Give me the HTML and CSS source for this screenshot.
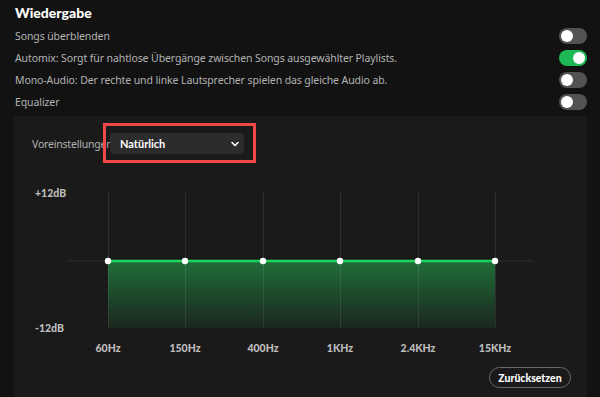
FILE: index.html
```html
<!DOCTYPE html>
<html lang="de">
<head>
    <meta charset="UTF-8">
    <meta name="viewport" content="width=device-width, initial-scale=1.0">
    <title>Wiedergabe</title>
    <link rel="stylesheet" href="styles.css">
</head>
<body>
    <main class="page">
        <h1 class="title">Wiedergabe</h1>
        <ul class="settings">
            <li class="row"><span>Songs überblenden</span><span class="toggle"></span></li>
            <li class="row"><span>Automix: Sorgt für nahtlose Übergänge zwischen Songs ausgewählter Playlists.</span><span class="toggle on"></span></li>
            <li class="row"><span>Mono-Audio: Der rechte und linke Lautsprecher spielen das gleiche Audio ab.</span><span class="toggle"></span></li>
            <li class="row"><span>Equalizer</span><span class="toggle"></span></li>
        </ul>

        <section class="eq">
            <div class="preset">
                <span class="preset-label">Voreinstellungen</span>
                <div class="select">
                    <span>Natürlich</span>
                    <svg class="chevron" width="10" height="10" viewBox="0 0 10 10">
                        <path d="M2 3.5 L5 6.5 L8 3.5" fill="none" stroke="#fff" stroke-width="1.6" stroke-linecap="round" stroke-linejoin="round"/>
                    </svg>
                    <span class="highlight"></span>
                </div>
            </div>

            <svg class="chart" width="573" height="190" viewBox="14 172 573 190">
                <defs>
                    <linearGradient id="fill" x1="0" y1="0" x2="0" y2="1">
                        <stop offset="0" stop-color="#1f6e38"/>
                        <stop offset="1" stop-color="#1b261e"/>
                    </linearGradient>
                </defs>
                <line x1="68" y1="261" x2="533" y2="261" stroke="#2c2c2c" stroke-width="1"/>
                <rect x="108" y="261" width="387" height="67" fill="url(#fill)"/>
                <g stroke="rgba(255,255,255,0.09)" stroke-width="1">
                    <line x1="108.5" y1="192" x2="108.5" y2="328"/>
                    <line x1="185.5" y1="192" x2="185.5" y2="328"/>
                    <line x1="263.5" y1="192" x2="263.5" y2="328"/>
                    <line x1="340.5" y1="192" x2="340.5" y2="328"/>
                    <line x1="418.5" y1="192" x2="418.5" y2="328"/>
                    <line x1="495.5" y1="192" x2="495.5" y2="328"/>
                </g>
                <line x1="108" y1="261" x2="495" y2="261" stroke="#1ed760" stroke-width="2.5"/>
                <g fill="#fff">
                    <circle cx="108" cy="261" r="3.2"/>
                    <circle cx="185" cy="261" r="3.2"/>
                    <circle cx="263" cy="261" r="3.2"/>
                    <circle cx="340" cy="261" r="3.2"/>
                    <circle cx="418" cy="261" r="3.2"/>
                    <circle cx="495" cy="261" r="3.2"/>
                </g>
                <g class="axis">
                    <text x="35" y="197">+12dB</text>
                    <text x="35" y="332">-12dB</text>
                </g>
                <g class="axis freq" text-anchor="middle">
                    <text x="108" y="352">60Hz</text>
                    <text x="185" y="352">150Hz</text>
                    <text x="263" y="352">400Hz</text>
                    <text x="340" y="352">1KHz</text>
                    <text x="418" y="352">2.4KHz</text>
                    <text x="495" y="352">15KHz</text>
                </g>
            </svg>

            <div class="actions">
                <button class="btn">Zurücksetzen</button>
            </div>
        </section>
    </main>
</body>
</html>
```

FILE: styles.css
```css
body {
    margin: 0;
    background: #121212;
    font-family: "Noto Sans", sans-serif;
    color: #b3b3b3;
    height: 397px;
    overflow: hidden;
}

.page {
    padding: 0 13px 0 14px;
}

.title {
    margin: 0;
    padding-left: 1px;
    font-family: Lato, "Noto Sans", sans-serif;
    font-size: 14px;
    font-weight: 900;
    line-height: 25px;
    color: #fff;
}

.settings {
    list-style: none;
    margin: 0;
    padding: 0;
}

.row {
    display: flex;
    align-items: center;
    justify-content: space-between;
    height: 22px;
    padding-left: 1px;
    font-size: 10.5px;
    letter-spacing: -0.1px;
}

.toggle {
    position: relative;
    width: 28px;
    height: 16px;
    border-radius: 8px;
    background: #535353;
}

.toggle::after {
    content: "";
    position: absolute;
    top: 2px;
    left: 2px;
    width: 12px;
    height: 12px;
    border-radius: 50%;
    background: #fff;
}

.toggle.on {
    background: #1db954;
}

.toggle.on::after {
    left: 14px;
}

.eq {
    margin-top: 3px;
    background: #1a1a1a;
    box-sizing: border-box;
    height: 281px;
    padding-top: 17px;
}

.preset {
    display: flex;
    align-items: center;
    padding-left: 18px;
    height: 21px;
}

.preset-label {
    font-size: 10.5px;
    letter-spacing: -0.2px;
    width: 78px;
    white-space: nowrap;
}

.select {
    position: relative;
    display: flex;
    align-items: center;
    justify-content: space-between;
    width: 134px;
    height: 21px;
    box-sizing: border-box;
    padding: 0 4px 0 10px;
    border-radius: 4px;
    background: #2c2c2c;
    font-family: Lato, "Noto Sans", sans-serif;
    font-size: 11px;
    font-weight: 700;
    color: #fff;
}

.highlight {
    position: absolute;
    top: -10px;
    left: -7px;
    right: -12px;
    bottom: -9px;
    border: 3px solid #f04848;
}

.chart {
    display: block;
    margin-top: 18px;
}

.axis text {
    font-family: Lato, "Noto Sans", sans-serif;
    font-size: 10.5px;
    font-weight: 900;
    fill: #bdbdbd;
}

.actions {
    display: flex;
    justify-content: flex-end;
    padding-right: 16px;
    margin-top: 5px;
}

.btn {
    height: 21px;
    width: 82px;
    padding: 0;
    border: 1px solid #6a6a6a;
    border-radius: 11px;
    background: transparent;
    font-family: Lato, "Noto Sans", sans-serif;
    font-size: 10.5px;
    font-weight: 900;
    color: #fff;
}
```
